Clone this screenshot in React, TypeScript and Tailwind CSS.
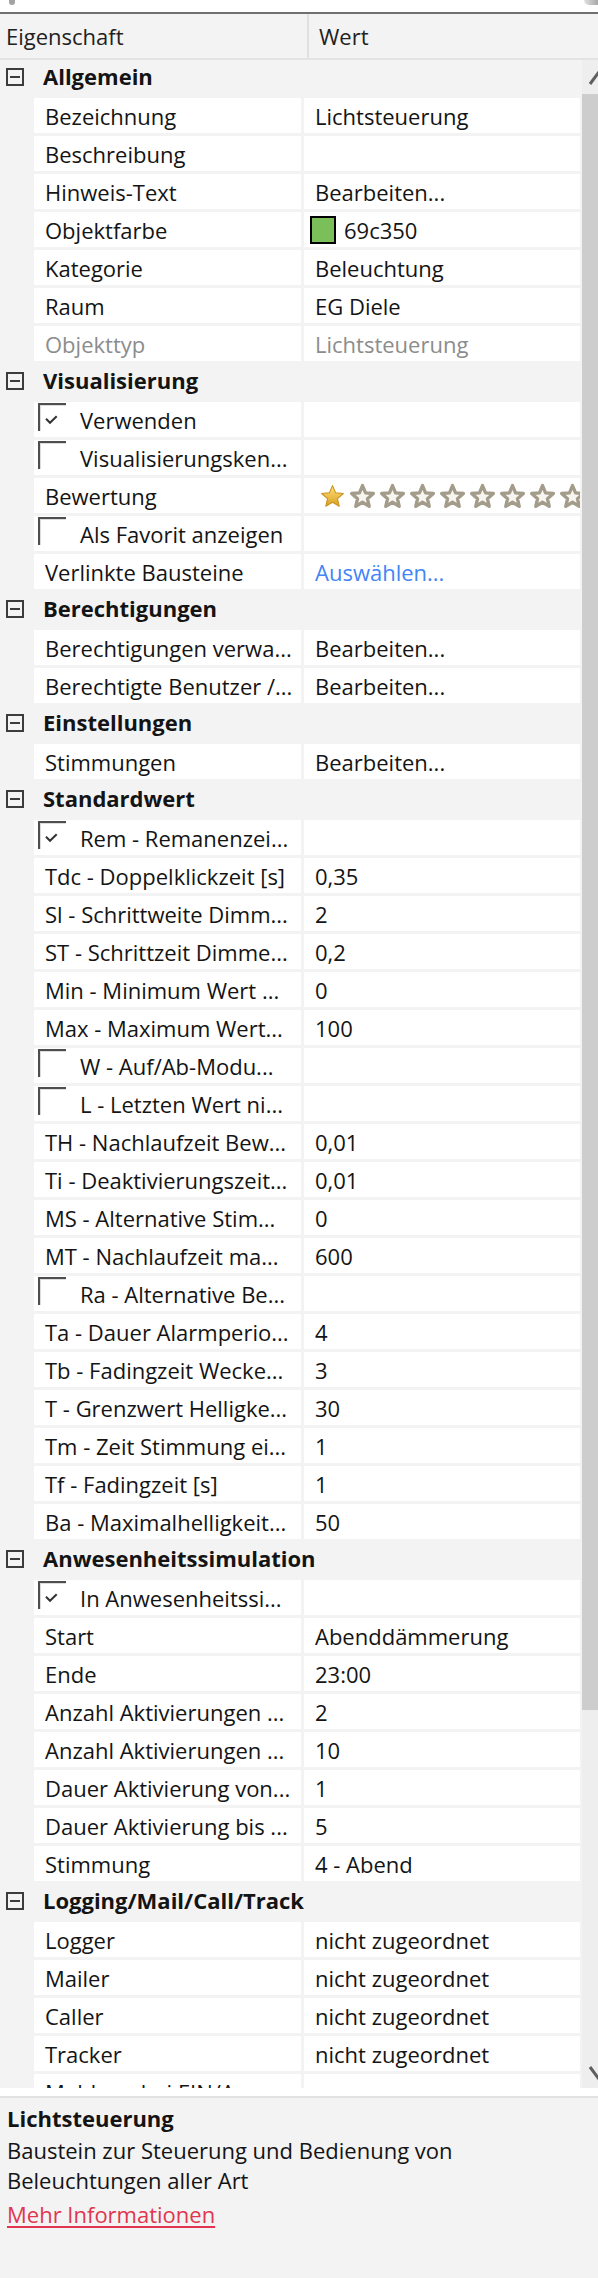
type Row = {
  name: string;
  value?: string;
  check?: boolean;
  kind?: "color" | "stars" | "link" | "muted";
};

type Section = { title: string; rows: Row[] };

const sections: Section[] = [
  {
    title: "Allgemein",
    rows: [
      { name: "Bezeichnung", value: "Lichtsteuerung" },
      { name: "Beschreibung" },
      { name: "Hinweis-Text", value: "Bearbeiten..." },
      { name: "Objektfarbe", value: "69c350", kind: "color" },
      { name: "Kategorie", value: "Beleuchtung" },
      { name: "Raum", value: "EG Diele" },
      { name: "Objekttyp", value: "Lichtsteuerung", kind: "muted" },
    ],
  },
  {
    title: "Visualisierung",
    rows: [
      { name: "Verwenden", check: true },
      { name: "Visualisierungsken...", check: false },
      { name: "Bewertung", kind: "stars" },
      { name: "Als Favorit anzeigen", check: false },
      { name: "Verlinkte Bausteine", value: "Auswählen...", kind: "link" },
    ],
  },
  {
    title: "Berechtigungen",
    rows: [
      { name: "Berechtigungen verwa...", value: "Bearbeiten..." },
      { name: "Berechtigte Benutzer /...", value: "Bearbeiten..." },
    ],
  },
  {
    title: "Einstellungen",
    rows: [{ name: "Stimmungen", value: "Bearbeiten..." }],
  },
  {
    title: "Standardwert",
    rows: [
      { name: "Rem - Remanenzei...", check: true },
      { name: "Tdc - Doppelklickzeit [s]", value: "0,35" },
      { name: "Sl - Schrittweite Dimm...", value: "2" },
      { name: "ST - Schrittzeit Dimme...", value: "0,2" },
      { name: "Min - Minimum Wert ...", value: "0" },
      { name: "Max - Maximum Wert...", value: "100" },
      { name: "W - Auf/Ab-Modu...", check: false },
      { name: "L - Letzten Wert ni...", check: false },
      { name: "TH - Nachlaufzeit Bew...", value: "0,01" },
      { name: "Ti - Deaktivierungszeit...", value: "0,01" },
      { name: "MS - Alternative Stim...", value: "0" },
      { name: "MT - Nachlaufzeit ma...", value: "600" },
      { name: "Ra - Alternative Be...", check: false },
      { name: "Ta - Dauer Alarmperio...", value: "4" },
      { name: "Tb - Fadingzeit Wecke...", value: "3" },
      { name: "T - Grenzwert Helligke...", value: "30" },
      { name: "Tm - Zeit Stimmung ei...", value: "1" },
      { name: "Tf - Fadingzeit [s]", value: "1" },
      { name: "Ba - Maximalhelligkeit...", value: "50" },
    ],
  },
  {
    title: "Anwesenheitssimulation",
    rows: [
      { name: "In Anwesenheitssi...", check: true },
      { name: "Start", value: "Abenddämmerung" },
      { name: "Ende", value: "23:00" },
      { name: "Anzahl Aktivierungen ...", value: "2" },
      { name: "Anzahl Aktivierungen ...", value: "10" },
      { name: "Dauer Aktivierung von...", value: "1" },
      { name: "Dauer Aktivierung bis ...", value: "5" },
      { name: "Stimmung", value: "4 - Abend" },
    ],
  },
  {
    title: "Logging/Mail/Call/Track",
    rows: [
      { name: "Logger", value: "nicht zugeordnet" },
      { name: "Mailer", value: "nicht zugeordnet" },
      { name: "Caller", value: "nicht zugeordnet" },
      { name: "Tracker", value: "nicht zugeordnet" },
      { name: "Meldung bei EIN/Aus..." },
    ],
  },
];

// star outline, outer radius 11, inner 5
const STAR = "12,1.5 14.94,8.45 22.46,9.1 16.76,14.05 18.47,21.4 12,17.5 5.53,21.4 7.24,14.05 1.54,9.1 9.06,8.45";

function Star({ filled }: { filled: boolean }) {
  return (
    <svg width="25" height="24" viewBox="0 0 24 23" className="block shrink-0 overflow-visible">
      {filled ? (
        <>
          <defs>
            <linearGradient id="starGold" x1="0" y1="0" x2="0" y2="1">
              <stop offset="0" stopColor="#ffe37c" />
              <stop offset="1" stopColor="#d99e22" />
            </linearGradient>
          </defs>
          <polygon points={STAR} fill="url(#starGold)" stroke="#c8921c" strokeWidth="1" strokeLinejoin="round" />
        </>
      ) : (
        <polygon points={STAR} fill="#f7f5f0" stroke="#a39c8b" strokeWidth="3.2" strokeLinejoin="round" />
      )}
    </svg>
  );
}

function MinusBox() {
  return (
    <div className="ml-[6px] mt-[8px] flex h-[18px] w-[18px] shrink-0 items-center justify-center border-2 border-[#3c3c3c]">
      <div className="h-[2px] w-[10px] bg-[#3c3c3c]" />
    </div>
  );
}

function CheckBox({ checked }: { checked: boolean }) {
  return (
    <div className="mt-[1px] h-[28px] w-[28px] shrink-0 self-start border-l-2 border-t-2 border-[#4e4e4e] bg-white">
      <div className="h-full w-full border-l border-t border-[#dcdcdc]">
        {checked && (
          <svg width="13" height="10" viewBox="0 0 13 10" className="ml-[4px] mt-[9px] block">
            <path d="M1 3.8 L5 7.8 L11.7 1.2" fill="none" stroke="#333333" strokeWidth="2" />
          </svg>
        )}
      </div>
    </div>
  );
}

function Value({ row }: { row: Row }) {
  if (row.kind === "color") {
    return (
      <>
        <div className="ml-[6px] h-[28px] w-[26px] shrink-0 border-2 border-black bg-[#7bbf5a]" />
        <span className="ml-[8px]">{row.value}</span>
      </>
    );
  }
  if (row.kind === "stars") {
    return (
      <div className="flex gap-[5px] pl-[16px]">
        {Array.from({ length: 10 }).map((_, i) => (
          <Star key={i} filled={i === 0} />
        ))}
      </div>
    );
  }
  if (!row.value) return null;
  const color = row.kind === "link" ? "text-[#4285f4]" : row.kind === "muted" ? "text-[#8c8c8c]" : "";
  return <span className={`pl-[11px] ${color}`}>{row.value}</span>;
}

function PropRow({ row }: { row: Row }) {
  const hasCheck = row.check !== undefined;
  return (
    <div className="flex h-[38px] gap-[3px] pb-[3px] pl-[34px] pr-[2px]">
      <div
        className={`flex w-[267px] shrink-0 items-center overflow-hidden whitespace-nowrap bg-white ${
          hasCheck ? "pl-[4px]" : "pl-[11px]"
        } ${row.kind === "muted" ? "text-[#8c8c8c]" : ""}`}
      >
        {hasCheck && <CheckBox checked={!!row.check} />}
        <span className={hasCheck ? "ml-[14px]" : ""}>{row.name}</span>
      </div>
      <div className="flex min-w-0 flex-1 items-center overflow-hidden whitespace-nowrap bg-white">
        <Value row={row} />
      </div>
    </div>
  );
}

function Scrollbar() {
  return (
    <div className="flex w-[16px] shrink-0 flex-col overflow-hidden bg-[#eeeeee]">
      <div className="h-[34px] shrink-0 pt-[10px]">
        <svg width="34" height="16" viewBox="0 0 34 16" className="block">
          <path d="M8 14 L17 2 L26 14" fill="none" stroke="#5f5f5f" strokeWidth="3" />
        </svg>
      </div>
      <div className="h-[1616px] shrink-0 bg-[#cdcdcd]" />
      <div className="flex-1" />
      <div className="h-[34px] shrink-0 pt-[11px]">
        <svg width="34" height="16" viewBox="0 0 34 16" className="block">
          <path d="M8 2 L17 14 L26 2" fill="none" stroke="#5f5f5f" strokeWidth="3" />
        </svg>
      </div>
    </div>
  );
}

export default function App() {
  return (
    <div className="flex h-[2278px] w-[598px] flex-col overflow-hidden bg-white font-['Open_Sans','Noto_Sans',sans-serif] text-[22px] leading-[30px] text-[#141414]">
      {/* remains of the toolbar above */}
      <div className="flex h-[12px] shrink-0 items-start justify-between">
        <div className="ml-[9px] h-[5px] w-[6px] rounded-b-[3px] bg-[#a2a2a2]" />
        <div className="h-[5px] w-[14px] rounded-bl-[10px] bg-linear-to-r from-[#e2e2e2] to-[#a8a8a8]" />
      </div>
      <div className="h-[2px] shrink-0 bg-[#707070]" />

      <div className="flex h-[46px] shrink-0 border-b-2 border-[#e3e3e3] bg-[#f3f3f3] text-[#222]">
        <div className="flex w-[307px] items-center pl-[6px]">Eigenschaft</div>
        <div className="w-[2px] bg-[#e0e0e0]" />
        <div className="flex items-center pl-[10px]">Wert</div>
      </div>

      <div className="flex h-[2028px] shrink-0">
        <div className="w-[582px] shrink-0 overflow-hidden bg-[#f3f3f3]">
          {sections.map((s) => (
            <div key={s.title}>
              <div className="flex h-[38px] items-start">
                <MinusBox />
                <span className="ml-[19px] mt-[1px] font-bold">{s.title}</span>
              </div>
              {s.rows.map((r, i) => (
                <PropRow key={i} row={r} />
              ))}
            </div>
          ))}
        </div>
        <Scrollbar />
      </div>

      <div className="h-[8px] shrink-0 bg-white" />
      <div className="h-[2px] shrink-0 bg-[#e2e2e2]" />

      <div className="flex-1 bg-[#f3f3f3] pl-[7px] pt-[5px]">
        <div className="font-bold">Lichtsteuerung</div>
        <div className="mt-[2px]">
          <div>Baustein zur Steuerung und Bedienung von</div>
          <div>Beleuchtungen aller Art</div>
        </div>
        <div className="mt-[4px]">
          <span className="text-[#e0364f] underline decoration-2 underline-offset-[3px]">Mehr Informationen</span>
        </div>
      </div>
    </div>
  );
}
